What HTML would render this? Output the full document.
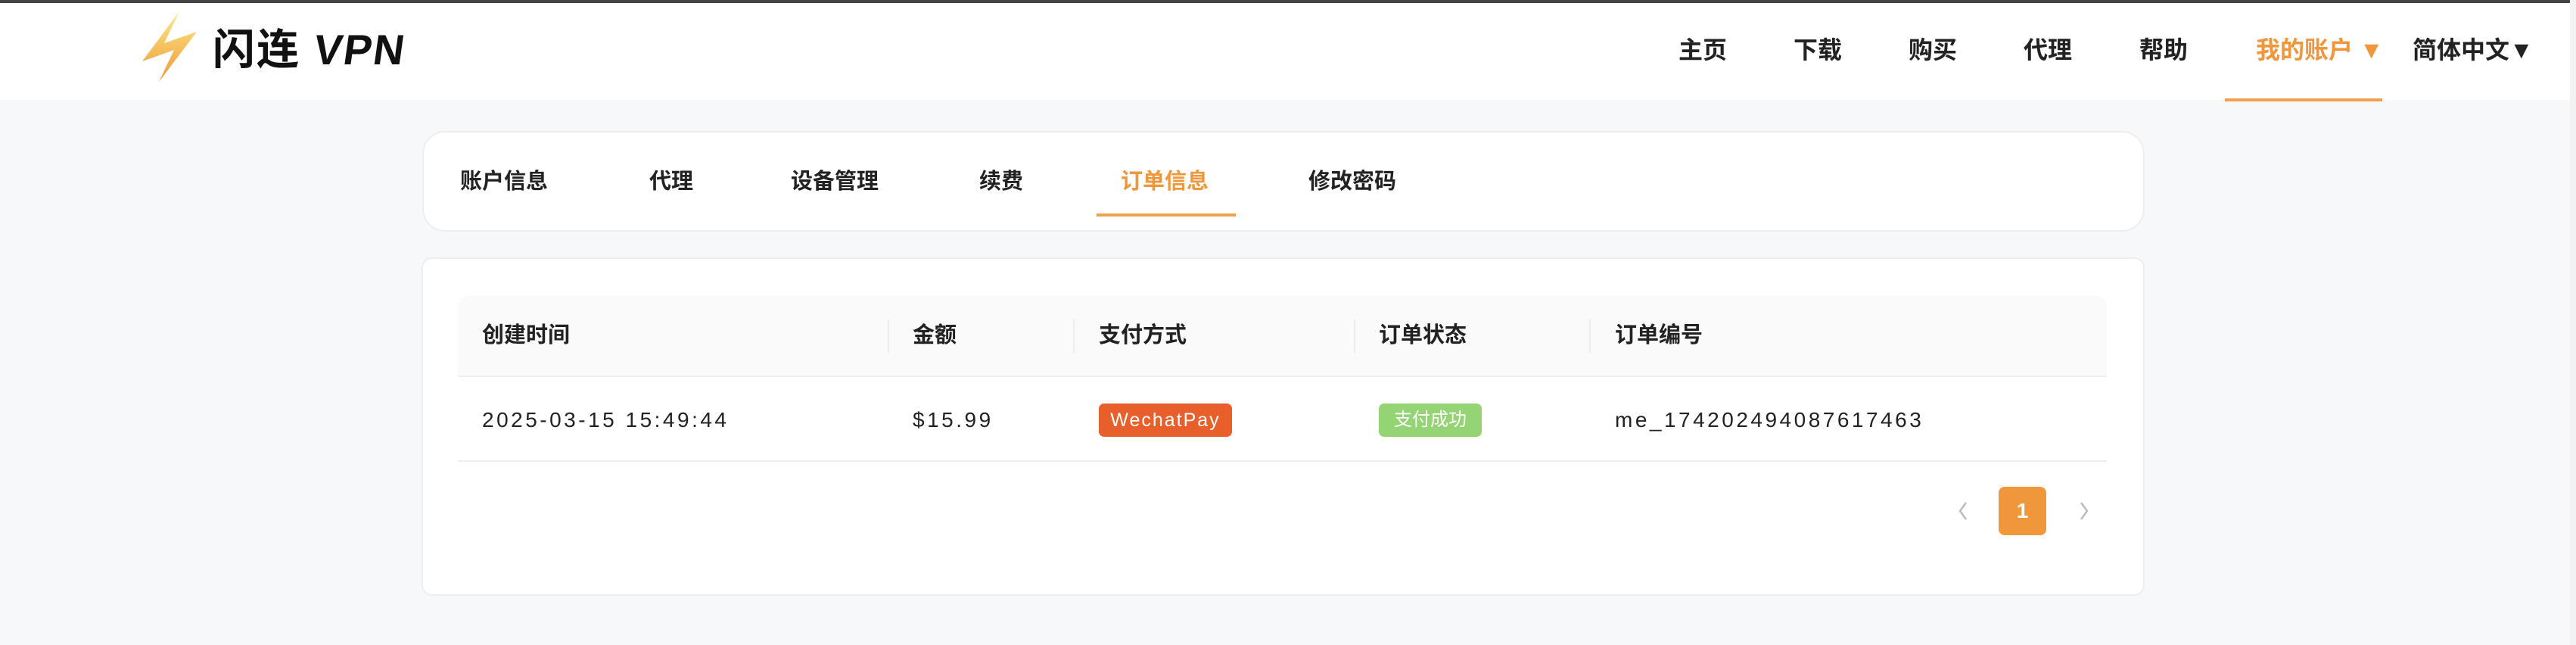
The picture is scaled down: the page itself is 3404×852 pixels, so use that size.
<!DOCTYPE html>
<html><head><meta charset="utf-8"><style>
*{margin:0;padding:0;box-sizing:border-box}
body{width:3404px;height:852px;background:#f7f8fa;font-family:"Liberation Sans","Noto Sans CJK SC",sans-serif;position:relative;overflow:hidden;color:#222}
.a{position:absolute;white-space:nowrap}
.nav{top:44px;font-size:32px;font-weight:bold;color:#222;line-height:44px}
.tab{top:218px;font-size:29px;font-weight:bold;line-height:44px;color:#222}
.th{top:421px;font-size:29px;font-weight:bold;line-height:44px;color:#222}
.td{top:533px;font-size:28px;line-height:44px;color:#222;letter-spacing:3.5px}
.sep{position:absolute;top:422px;width:2px;height:44px;background:#ececec}
</style></head><body>
<div class="a" style="left:0;top:0;width:3404px;height:4px;background:#444"></div>
<div class="a" style="left:0;top:4px;width:3404px;height:128px;background:#fff"></div>
<svg class="a" style="left:180px;top:10px" width="90" height="104" viewBox="180 10 90 104">
<defs><linearGradient id="g" x1="0" y1="0" x2="0" y2="1"><stop offset="0" stop-color="#fde888"/><stop offset="1" stop-color="#ee9a38"/></linearGradient></defs>
<polygon points="237,15 188,81 230,66 210,108 260,42 217,57" fill="url(#g)"/>
</svg>
<div class="a" style="left:281px;top:33px;font-size:56px;font-weight:bold;line-height:66px;color:#111;letter-spacing:2px">闪连 <span style="display:inline-block;transform:skewX(-8deg)">VPN</span></div>
<div class="a nav" style="left:2218px">主页</div>
<div class="a nav" style="left:2370px">下载</div>
<div class="a nav" style="left:2522px">购买</div>
<div class="a nav" style="left:2674px">代理</div>
<div class="a nav" style="left:2827px">帮助</div>
<div class="a nav" style="left:2981px;color:#f0973b">我的账户 ▼</div>
<div class="a nav" style="left:3188px">简体中文▼</div>
<div class="a" style="left:2940px;top:130px;width:208px;height:4px;background:#f0a04b"></div>
<div class="a" style="left:3396px;top:0;width:8px;height:852px;background:#f2f2f2"></div>

<div class="a" style="left:558px;top:173px;width:2276px;height:133px;background:#fff;border:2px solid #eee;border-radius:30px"></div>
<div class="a tab" style="left:608px">账户信息</div>
<div class="a tab" style="left:858px">代理</div>
<div class="a tab" style="left:1045px">设备管理</div>
<div class="a tab" style="left:1294px">续费</div>
<div class="a tab" style="left:1481px;color:#f0973b">订单信息</div>
<div class="a tab" style="left:1729px">修改密码</div>
<div class="a" style="left:1449px;top:282px;width:184px;height:4px;background:#f0a04b"></div>

<div class="a" style="left:557px;top:340px;width:2277px;height:447px;background:#fff;border:2px solid #eee;border-radius:14px"></div>
<div class="a" style="left:605px;top:390px;width:2179px;height:108px;background:#fafafa;border-radius:16px 16px 0 0;border-bottom:2px solid #eeeeee"></div>
<div class="a" style="left:605px;top:608px;width:2179px;height:2px;background:#eeeeee"></div>
<div class="sep" style="left:1173px"></div><div class="sep" style="left:1418px"></div><div class="sep" style="left:1789px"></div><div class="sep" style="left:2100px"></div>
<div class="a th" style="left:637px">创建时间</div>
<div class="a th" style="left:1206px">金额</div>
<div class="a th" style="left:1452px">支付方式</div>
<div class="a th" style="left:1822px">订单状态</div>
<div class="a th" style="left:2134px">订单编号</div>
<div class="a td" style="left:637px">2025-03-15 15:49:44</div>
<div class="a td" style="left:1206px">$15.99</div>
<div class="a" style="left:1452px;top:533px;width:176px;height:44px;background:#e95f2b;border-radius:7px;color:#fff;font-size:25px;line-height:44px;text-align:center;letter-spacing:2px">WechatPay</div>
<div class="a" style="left:1822px;top:533px;width:136px;height:44px;background:#95d475;border-radius:7px;color:#fff;font-size:24px;line-height:44px;text-align:center">支付成功</div>
<div class="a td" style="left:2134px">me_174202494087617463</div>
<svg class="a" style="left:2584px;top:660px" width="20" height="30"><polyline points="14,4 6,15 14,26" fill="none" stroke="#bbb" stroke-width="2.5"/></svg>
<div class="a" style="left:2641px;top:643px;width:63px;height:64px;background:#f0973b;border-radius:8px;color:#fff;font-size:28px;font-weight:bold;line-height:64px;text-align:center">1</div>
<svg class="a" style="left:2744px;top:660px" width="20" height="30"><polyline points="6,4 14,15 6,26" fill="none" stroke="#bbb" stroke-width="2.5"/></svg>
</body></html>
